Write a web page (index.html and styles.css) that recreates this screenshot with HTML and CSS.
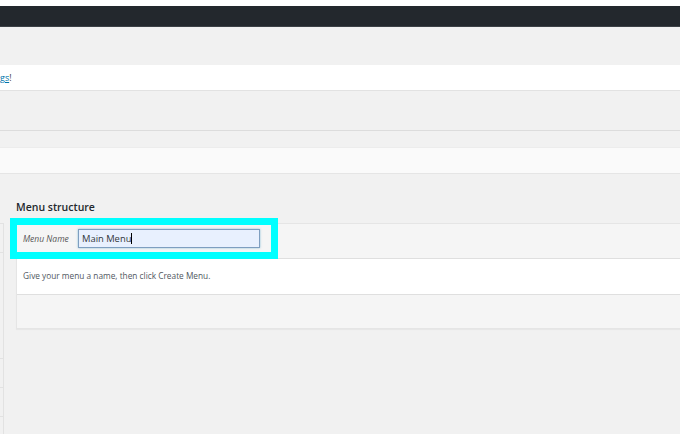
FILE: index.html
```html
<!DOCTYPE html>
<html lang="en">
<head>
  <meta charset="UTF-8">
  <meta name="viewport" content="width=device-width, initial-scale=1.0">
  <title>Menus</title>
  <link rel="stylesheet" href="styles.css">
</head>
<body>
  <div class="top-strip"></div>
  <div class="admin-bar"></div>

  <div class="page-space"></div>

  <div class="notice"><a href="#">gs</a>!</div>

  <div class="tabs-space"></div>

  <div class="manage-bar"></div>

  <div class="columns">
    <div class="sidebar">
      <div class="side-row short"></div>
      <div class="side-row tall"></div>
      <div class="side-row short"></div>
      <div class="side-row short"></div>
      <div class="side-row short"></div>
    </div>

    <div class="main">
      <div class="section-title">Menu structure</div>
      <div class="menu-panel">
        <div class="panel-header">
          <div class="name-field">
            <span class="name-label">Menu Name</span>
            <div class="name-input">Main Menu<span class="caret"></span></div>
          </div>
        </div>
        <div class="panel-body">Give your menu a name, then click Create Menu.</div>
        <div class="panel-footer"></div>
      </div>
    </div>
  </div>
</body>
</html>
```

FILE: styles.css
```css
body {
  margin: 0;
  background-color: #f1f1f1;
  font-family: "Open Sans", "Noto Sans", sans-serif;
  color: #444;
  overflow: hidden;
}
.top-strip {
  height: 6px;
  background-color: #fff;
}
.admin-bar {
  height: 20px;
  background-color: #23282d;
  border-bottom: 1px solid #3c4146;
}
.page-space {
  height: 38px;
}
.notice {
  height: 25px;
  line-height: 25px;
  background-color: #fff;
  border-bottom: 1px solid #e2e2e2;
  font-size: 9px;
}
.notice a {
  color: #0073aa;
}
.tabs-space {
  height: 39px;
  border-bottom: 1px solid #dcdcdc;
}
.manage-bar {
  height: 25px;
  margin-top: 16px;
  background-color: #fafafa;
  border-top: 1px solid #ececec;
  border-bottom: 1px solid #e5e5e5;
}
.columns {
  display: flex;
  margin-top: 26px;
}
.sidebar {
  width: 3px;
  margin-top: 23px;
  margin-right: 12px;
  border-right: 1px solid #e2e2e2;
  flex: none;
}
.side-row {
  border-top: 1px solid #e2e2e2;
}
.side-row.short {
  height: 28px;
}
.side-row.tall {
  height: 105px;
}
.main {
  flex: 1;
  min-width: 0;
}
.section-title {
  height: 23px;
  font-size: 10.5px;
  font-weight: 600;
  color: #23282d;
  line-height: 14px;
}
.menu-panel {
  border: 1px solid #e5e5e5;
  border-right: none;
  box-shadow: 0 1px 1px rgba(0, 0, 0, 0.04);
}
.panel-header {
  height: 34px;
  background-color: #f5f5f5;
  border-bottom: 1px solid #dfdfdf;
}
.name-field {
  display: inline-flex;
  align-items: center;
  width: 248px;
  height: 27px;
  margin-top: 1px;
  padding-left: 6px;
  outline: 7px solid #00ffff;
}
.name-label {
  font-size: 8.5px;
  font-style: italic;
  color: #555;
  width: 55px;
}
.name-input {
  box-sizing: border-box;
  width: 182px;
  height: 19px;
  padding: 0 3px;
  line-height: 17px;
  font-size: 9.4px;
  color: #32373c;
  background-color: #e8f0fe;
  border: 1px solid #7e9ec0;
  box-shadow: 0 0 2px rgba(30, 140, 190, 0.5);
}
.caret {
  display: inline-block;
  width: 1px;
  height: 11px;
  background-color: #000;
  vertical-align: -2px;
}
.panel-body {
  height: 35px;
  line-height: 34px;
  padding-left: 6px;
  background-color: #fff;
  font-size: 8.3px;
  color: #50575e;
}
.panel-footer {
  height: 33px;
  background-color: #f5f5f5;
  border-top: 1px solid #dfdfdf;
}
```
